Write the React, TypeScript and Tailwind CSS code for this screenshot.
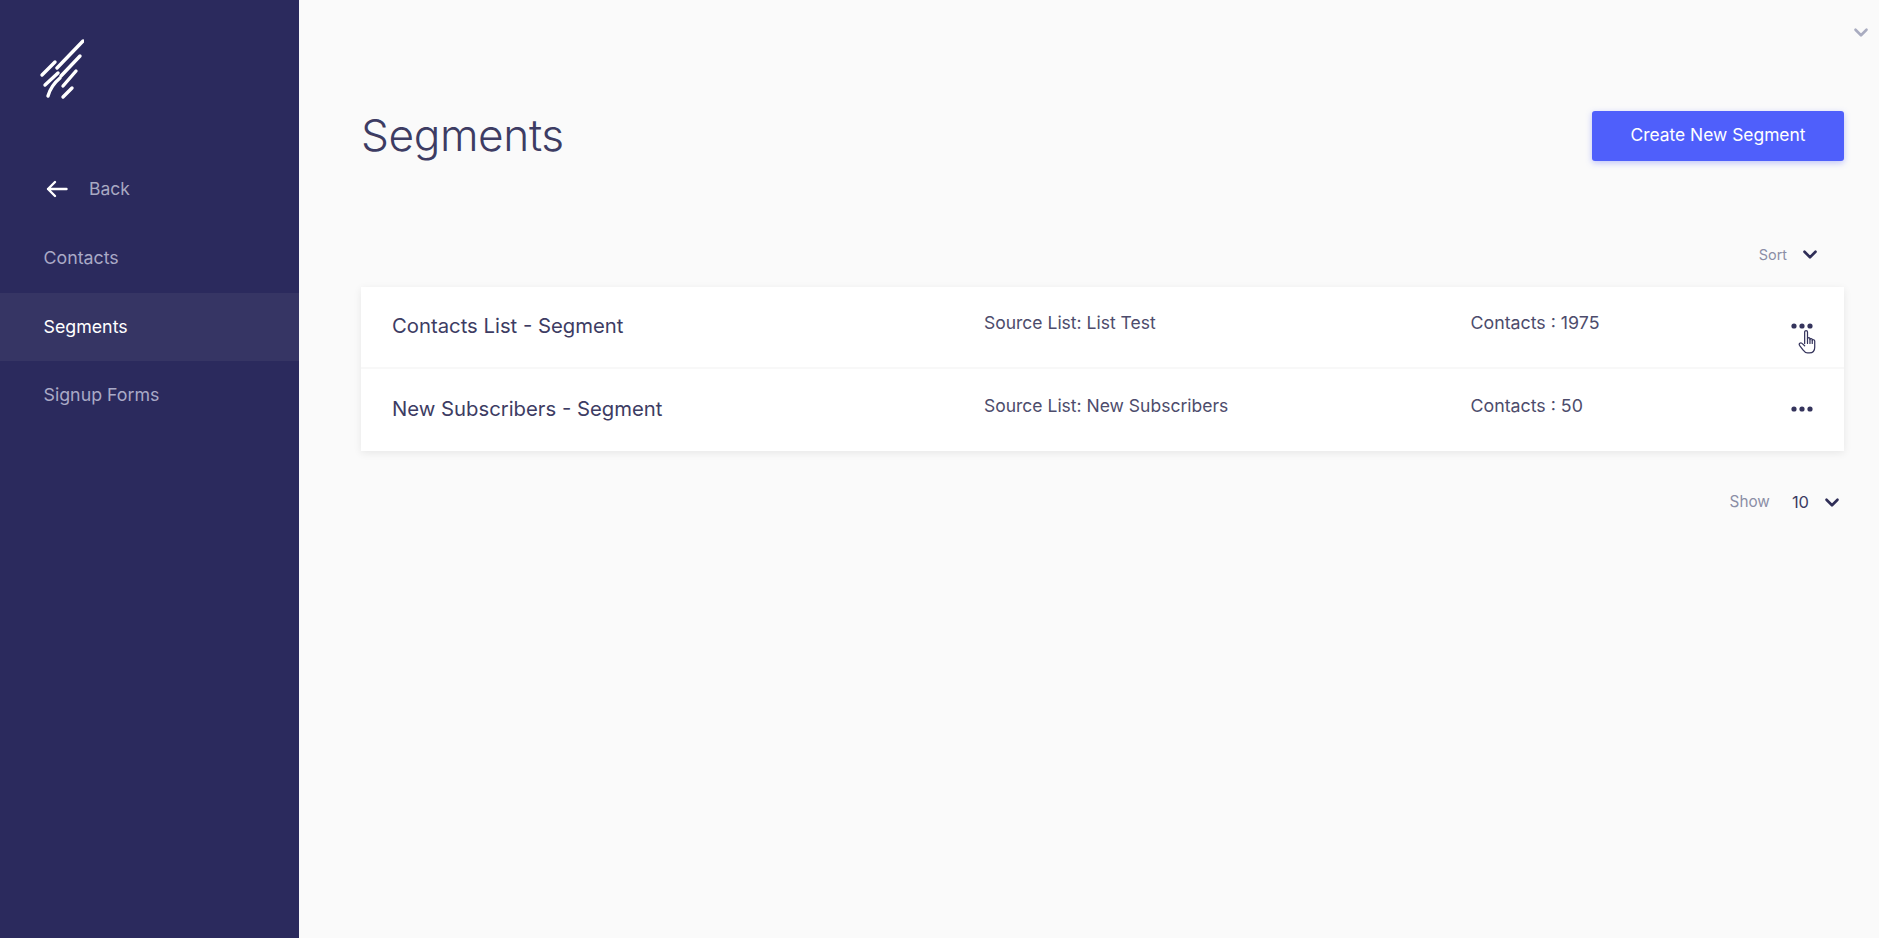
import React from "react";

const Chevron = ({ className }: { className: string }) => (
  <svg viewBox="0 0 14 10" className={className} fill="none" stroke="currentColor" strokeWidth="2.4" strokeLinecap="round" strokeLinejoin="round">
    <path d="M2 2.5 L7 7.5 L12 2.5" />
  </svg>
);

const Dots = () => (
  <svg viewBox="0 0 22 6" className="w-[22px] h-[6px] text-[#35345c]" fill="currentColor">
    <circle cx="3" cy="3" r="2.6" />
    <circle cx="11" cy="3" r="2.6" />
    <circle cx="19" cy="3" r="2.6" />
  </svg>
);

const Logo = () => (
  <svg viewBox="0 0 48 64" className="w-[48px] h-[64px] text-white" fill="none" stroke="currentColor" strokeWidth="3.4" strokeLinecap="round">
    <path d="M47 5 L21 32" />
    <path d="M19 26 L6 39" />
    <path d="M44 20 L25 40" />
    <path d="M22 37 L9 49" />
    <path d="M24 42 C18 47 14 53 12 60" />
    <path d="M40 35 L27 50" />
    <path d="M36 52 L27 61" />
  </svg>
);

const Hand = () => (
  <svg viewBox="0 0 20 26" className="w-[19px] h-[25px]" fill="#fff" stroke="#35345c" strokeWidth="1.3" strokeLinejoin="round" strokeLinecap="round">
    <path d="M7 15 V3 C7 1 10 1 10 3 V10 C10 8.5 12.6 8.5 12.6 10 V11 C12.6 9.6 15 9.6 15 11 V12 C15 10.8 17.6 10.8 17.6 12.4 V19 C17.6 22.5 15.5 25 12 25 H10 C7.5 25 6.5 23.5 5 21.5 L1.6 17 C0.6 15.5 2.5 13.5 4.2 15 L7 17.5" />
    <path d="M10 10 V15 M12.6 11 V15 M15 12 V15" />
  </svg>
);

const rows = [
  { name: "Contacts List - Segment", source: "Source List: List Test", contacts: "Contacts : 1975", hand: true },
  { name: "New Subscribers - Segment", source: "Source List: New Subscribers", contacts: "Contacts : 50", hand: false },
];

export default function App() {
  return (
    <div className="flex h-[938px] w-[1879px] overflow-hidden bg-[#fafafa] font-['Inter',sans-serif]">
      <aside className="w-[299px] shrink-0 bg-[#2b2a5d] flex flex-col">
        <div className="pl-[36px] pt-[36px] h-[161px]">
          <Logo />
        </div>
        <div className="flex items-center h-[56px] pl-[46px] gap-[21px] text-[17.5px] text-[#a9a9c2]">
          <svg viewBox="0 0 22 18" className="w-[22px] h-[18px]" fill="none" stroke="#fff" strokeWidth="2.4" strokeLinecap="round" strokeLinejoin="round">
            <path d="M20.5 9 H2 M9 2 L2 9 L9 16" />
          </svg>
          <span>Back</span>
        </div>
        <div className="flex flex-col text-[17.8px] mt-[7px]">
          <div className="h-[69px] flex items-center pl-[43.5px] text-[#a9a9c6]">Contacts</div>
          <div className="h-[68px] flex items-center pl-[43.5px] bg-[#363564] text-white">Segments</div>
          <div className="h-[69px] flex items-center pl-[43.5px] text-[#a9a9c6]">Signup Forms</div>
        </div>
      </aside>

      <main className="relative flex-1 pl-[62px] pr-[35px]">
        <div className="absolute right-[10px] top-[27px]">
          <Chevron className="w-[16px] h-[11px] text-[#a9acc0]" />
        </div>
        <header className="flex items-start justify-between pt-[111px]">
          <h1 className="text-[44.2px] leading-[48px] font-light text-[#3d3c63] tracking-[-0.4px]">Segments</h1>
          <button className="w-[252px] h-[50px] pb-[2px] rounded-[3px] bg-[#4f5ffb] text-white text-[17.4px] shadow-[0_2px_6px_rgba(79,95,251,0.35)]">
            Create New Segment
          </button>
        </header>

        <div className="flex items-center justify-end gap-[15px] pr-[26px] mt-[83px] h-[20px] text-[14.4px] text-[#8b8ea6]">
          <span className="pt-[1px]">Sort</span>
          <Chevron className="w-[16px] h-[11px] text-[#2f2e57]" />
        </div>

        <section className="mt-[23px] bg-white shadow-[0_2px_8px_rgba(0,0,0,0.08)]">
          {rows.map((r, i) => (
            <div key={r.name} className={`flex items-center h-[82px] pl-[31px] pr-[31px] ${i === 0 ? "border-b-2 border-[#f8f8f8]" : ""}`}>
              <div className="w-[592px] text-[20.3px] font-normal text-[#3d3c63] pb-[2px]">{r.name}</div>
              <div className="w-[486.5px] text-[17.5px] text-[#4d4c6c] pb-[8px]">{r.source}</div>
              <div className="flex-1 text-[17.8px] text-[#4d4c6c] pb-[8px]">{r.contacts}</div>
              <div className="relative mb-[2px]">
                <Dots />
                {r.hand && (
                  <div className="absolute left-[7px] top-[6px]">
                    <Hand />
                  </div>
                )}
              </div>
            </div>
          ))}
        </section>

        <div className="flex items-center justify-end pr-[4px] mt-[39px] h-[24px]">
          <span className="text-[15.3px] text-[#8b8ea6]">Show</span>
          <span className="ml-[22px] text-[16.5px] text-[#3d3c63]">10</span>
          <Chevron className="ml-[15px] w-[16px] h-[11px] text-[#2f2e57]" />
        </div>
      </main>
    </div>
  );
}
